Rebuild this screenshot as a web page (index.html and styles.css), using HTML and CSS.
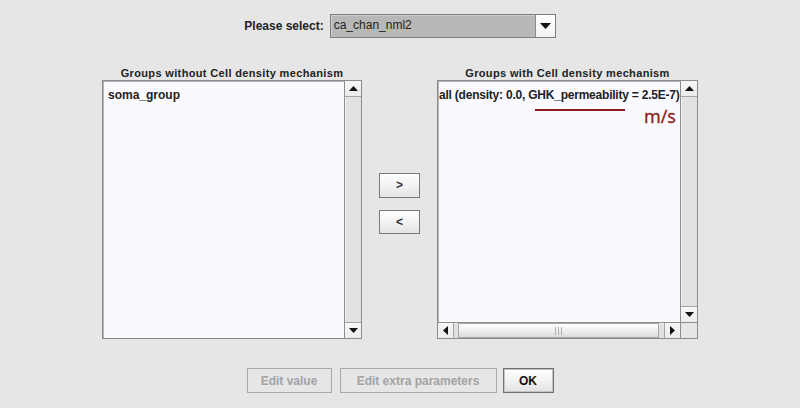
FILE: index.html
```html
<!DOCTYPE html>
<html>
<head>
<meta charset="utf-8">
<link rel="stylesheet" href="styles.css">
</head>
<body>
<div class="app">
  <div class="top">
    <span class="lbl">Please select:</span>
    <div class="combo">
      <div class="combo-field">ca_chan_nml2</div>
      <div class="combo-btn"><svg width="11" height="6" viewBox="0 0 11 6"><path d="M0 0H11L5.5 6Z" fill="#111"/></svg></div>
    </div>
  </div>
  <div class="main">
    <div class="col left">
      <div class="hdr">Groups without Cell density mechanism</div>
      <div class="pane pane-v">
        <div class="viewport"><div class="item">soma_group</div></div>
        <div class="vbar">
          <div class="sbtn sbtn-up"><svg width="9" height="5" viewBox="0 0 9 5"><path d="M0 5H9L4.5 0Z" fill="#111"/></svg></div>
          <div class="vtrack"></div>
          <div class="sbtn sbtn-down"><svg width="9" height="5" viewBox="0 0 9 5"><path d="M0 0H9L4.5 5Z" fill="#111"/></svg></div>
        </div>
      </div>
    </div>
    <div class="mid">
      <button class="arrow-btn first">&gt;</button>
      <button class="arrow-btn">&lt;</button>
    </div>
    <div class="col right">
      <div class="hdr">Groups with Cell density mechanism</div>
      <div class="pane pane-vh">
        <div class="viewport"><div class="item shifted">all (density: 0.0, GHK_permeability = 2.5E-7)</div></div>
        <div class="vbar">
          <div class="sbtn sbtn-up"><svg width="9" height="5" viewBox="0 0 9 5"><path d="M0 5H9L4.5 0Z" fill="#111"/></svg></div>
          <div class="vtrack"></div>
          <div class="sbtn sbtn-down"><svg width="9" height="5" viewBox="0 0 9 5"><path d="M0 0H9L4.5 5Z" fill="#111"/></svg></div>
        </div>
        <div class="hbar">
          <div class="hbtn hbtn-left"><svg width="5" height="9" viewBox="0 0 5 9"><path d="M5 0V9L0 4.5Z" fill="#111"/></svg></div>
          <div class="htrack"><div class="thumb"><span class="grip"></span><span class="grip"></span><span class="grip"></span></div></div>
          <div class="hbtn hbtn-right"><svg width="5" height="9" viewBox="0 0 5 9"><path d="M0 0V9L5 4.5Z" fill="#111"/></svg></div>
        </div>
        <div class="corner"></div>
        <div class="annot-line"></div>
        <div class="annot-text">m/s</div>
      </div>
    </div>
  </div>
  <div class="bottom">
    <button class="btn disabled w-edit">Edit value</button>
    <button class="btn disabled w-extra">Edit extra parameters</button>
    <button class="btn ok">OK</button>
  </div>
</div>
</body>
</html>
```

FILE: styles.css
```css
html, body {
  margin: 0;
  padding: 0;
}
body {
  width: 800px;
  height: 408px;
  overflow: hidden;
  background: #e6e6e6;
  font-family: "Liberation Sans", Arial, sans-serif;
  color: #222;
}
.app {
  display: flex;
  flex-direction: column;
}
.top {
  display: flex;
  justify-content: center;
  align-items: center;
  gap: 6px;
  padding-top: 14px;
  height: 24px;
}
.lbl {
  font-weight: bold;
  font-size: 12px;
  color: #222;
}
.combo {
  display: flex;
  width: 226px;
  height: 24px;
  box-sizing: border-box;
  border: 1px solid #7d7d7d;
  background: #b8b8b8;
}
.combo-field {
  flex: 1;
  padding-left: 3px;
  font-size: 12px;
  line-height: 21px;
  color: #222;
  border-right: 1px solid #8c8c8c;
  box-shadow: inset 1px 1px 0 #cfcfcf;
}
.combo-btn {
  width: 19px;
  background: linear-gradient(#ffffff, #f3f3f3);
  display: flex;
  align-items: center;
  justify-content: center;
}
.main {
  display: flex;
  justify-content: center;
  gap: 17px;
  margin-top: 29px;
  height: 272px;
}
.col {
  display: flex;
  flex-direction: column;
}
.left { width: 260px; }
.right { width: 261px; }
.hdr {
  height: 13px;
  line-height: 13px;
  font-size: 11px;
  letter-spacing: 0.35px;
  font-weight: bold;
  text-align: center;
  color: #222;
  white-space: nowrap;
}
.pane {
  flex: 1;
  box-sizing: border-box;
  border: 1px solid #8c8c8c;
  box-shadow: inset 1px 1px 0 #b4b4b4;
  background: #f9f9ff;
  display: grid;
  grid-template-columns: 1fr 17px;
  position: relative;
}
.pane-v { grid-template-rows: 1fr; }
.pane-vh { grid-template-rows: 1fr 16px; }
.viewport {
  overflow: hidden;
  padding-top: 6px;
  min-width: 0;
}
.item {
  font-size: 12px;
  font-weight: bold;
  line-height: 16px;
  padding-left: 5px;
  white-space: nowrap;
  color: #222;
}
.item.shifted {
  padding-left: 1px;
  letter-spacing: -0.22px;
}
.vbar {
  display: flex;
  flex-direction: column;
  border-left: 1px solid #8e8e8e;
  background: #e1e1e1;
}
.sbtn {
  height: 16px;
  box-sizing: border-box;
  background: linear-gradient(#f6f6f6, #ececec);
  display: flex;
  align-items: center;
  justify-content: center;
}
.sbtn-up { border-bottom: 1px solid #a4a4a4; }
.sbtn-down { border-top: 1px solid #a4a4a4; }
.vtrack {
  flex: 1;
  box-shadow: inset 1px 0 0 #f2f2f2;
}
.hbar {
  display: flex;
  border-top: 1px solid #8e8e8e;
  background: #e1e1e1;
  box-sizing: border-box;
  height: 16px;
}
.hbtn {
  width: 16px;
  box-sizing: border-box;
  background: linear-gradient(#f6f6f6, #ececec);
  display: flex;
  align-items: center;
  justify-content: center;
}
.hbtn-left { border-right: 1px solid #a4a4a4; }
.hbtn-right { border-left: 1px solid #a4a4a4; }
.htrack {
  flex: 1;
  display: flex;
  box-shadow: inset 0 1px 0 #f2f2f2;
}
.thumb {
  flex: 1;
  margin: 0 5px 0 4px;
  box-sizing: border-box;
  border: 1px solid #a6a6a6;
  background: linear-gradient(#ffffff, #f1f1f1 45%, #dcdcdc);
  display: flex;
  justify-content: center;
  align-items: center;
  gap: 2px;
}
.grip {
  width: 1px;
  height: 8px;
  background: #b0b0b0;
}
.corner {
  border-left: 1px solid #8e8e8e;
  border-top: 1px solid #8e8e8e;
  background: #e6e6e6;
}
.annot-line {
  position: absolute;
  left: 97px;
  top: 28px;
  width: 90px;
  height: 2px;
  background: #8b1a1a;
}
.annot-text {
  position: absolute;
  left: 206px;
  top: 23px;
  font-family: "Open Sans", "DejaVu Sans", sans-serif;
  font-size: 18px;
  line-height: 24px;
  color: #8b1a1a;
  -webkit-text-stroke: 0.35px #8b1a1a;
}
.mid {
  align-self: center;
  display: flex;
  flex-direction: column;
  gap: 12px;
}
.arrow-btn {
  width: 41px;
  height: 24px;
  margin: 0;
  padding: 0;
  box-sizing: border-box;
  border: 1px solid #7a7a7a;
  background: linear-gradient(#fdfdfd, #f4f4f4 45%, #e4e4e4);
  font-family: "Liberation Sans", Arial, sans-serif;
  font-size: 12px;
  font-weight: bold;
  color: #333;
}
.arrow-btn.first { height: 25px; }
.bottom {
  display: flex;
  justify-content: center;
  margin-top: 29px;
}
.btn {
  height: 25px;
  margin: 0;
  padding: 0;
  box-sizing: border-box;
  font-family: "Liberation Sans", Arial, sans-serif;
  font-size: 12px;
  font-weight: bold;
}
.btn.disabled {
  border: 1px solid #aaaaaa;
  background: #e6e6e6;
  color: #a3a3a3;
}
.w-edit { width: 85px; margin-right: 8px; }
.w-extra { width: 157px; margin-right: 6px; }
.btn.ok {
  width: 51px;
  border: 1px solid #707070;
  box-shadow: inset 0 0 0 1px #c4c4c4;
  background: linear-gradient(#ffffff, #f4f4f4 45%, #e2e2e2);
  color: #111;
}
```
